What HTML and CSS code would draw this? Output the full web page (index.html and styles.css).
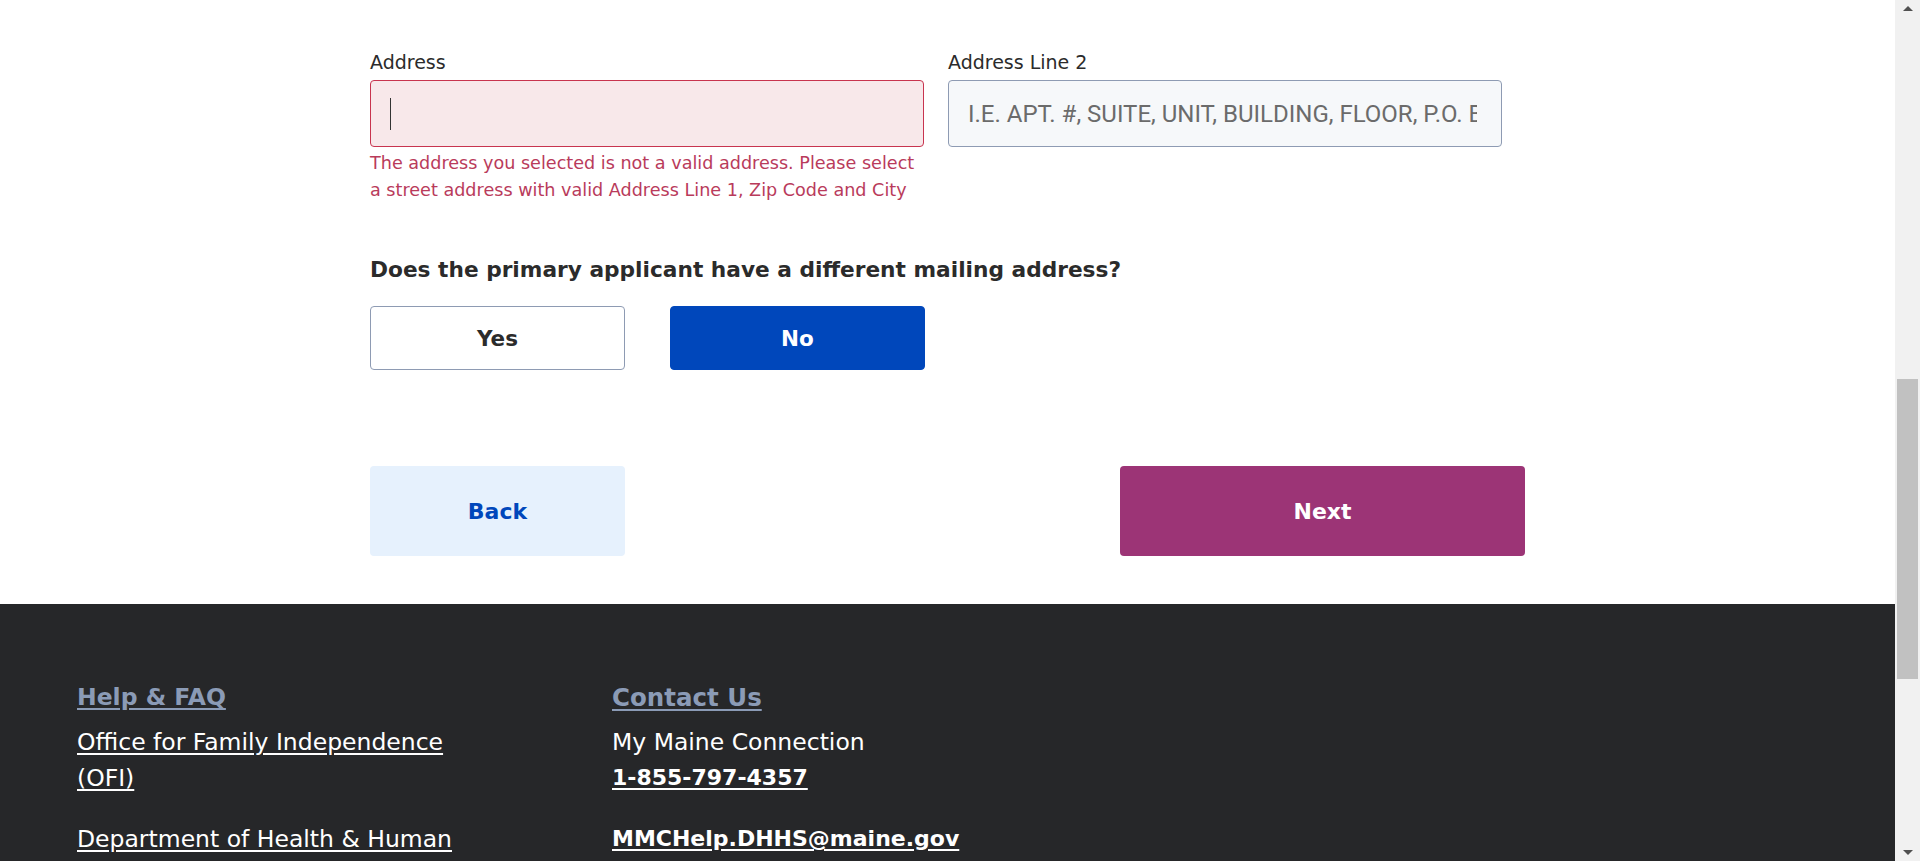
FILE: index.html
```html
<!DOCTYPE html>
<html lang="en">
<head>
<meta charset="utf-8">
<title>Primary applicant address</title>
<link rel="stylesheet" href="styles.css">
</head>
<body>
<div class="window">
  <div class="page">
    <main class="content">
      <div class="address-row">
        <div class="field-group">
          <label class="field-label">Address</label>
          <div class="input input-error"><span class="caret"></span></div>
          <p class="error-text">The address you selected is not a valid address. Please select<br>a street address with valid Address Line 1, Zip Code and City</p>
        </div>
        <div class="field-group">
          <label class="field-label" for="line2">Address Line 2</label>
          <input id="line2" class="input input-plain" placeholder="I.E. APT. #, SUITE, UNIT, BUILDING, FLOOR, P.O. BOX">
        </div>
      </div>
      <h2 class="question">Does the primary applicant have a different mailing address?</h2>
      <div class="choice-row">
        <button class="choice">Yes</button>
        <button class="choice choice-selected">No</button>
      </div>
      <div class="nav-row">
        <button class="btn-back">Back</button>
        <button class="btn-next">Next</button>
      </div>
    </main>
    <footer class="footer">
      <div class="footer-col">
        <a class="footer-heading" href="#">Help &amp; FAQ</a>
        <div class="footer-group">
          <a class="footer-link" href="#">Office for Family Independence (OFI)</a>
        </div>
        <div class="footer-group">
          <a class="footer-link" href="#">Department of Health &amp; Human Services (DHHS)</a>
        </div>
      </div>
      <div class="footer-col">
        <a class="footer-heading" href="#">Contact Us</a>
        <div class="footer-group">
          <span class="footer-text">My Maine Connection</span>
          <a class="footer-link footer-strong" href="#">1-855-797-4357</a>
        </div>
        <div class="footer-group">
          <a class="footer-link footer-strong" href="#">MMCHelp.DHHS@maine.gov</a>
        </div>
      </div>
    </footer>
  </div>
  <div class="scrollbar" aria-hidden="true">
    <span class="arrow arrow-up"></span>
    <div class="track"><div class="thumb"></div></div>
    <span class="arrow arrow-down"></span>
  </div>
</div>
</body>
</html>
```

FILE: styles.css
```css
* { box-sizing: border-box; }
html, body { margin: 0; height: 100%; }
body {
  font-family: "DejaVu Sans", "Open Sans", sans-serif;
  color: #2b2b2b;
  background: #fff;
  overflow: hidden;
}
.window { display: flex; height: 861px; }
.page { flex: 1; display: flex; flex-direction: column; overflow: hidden; }

.content { width: 1155px; margin: 0 auto; padding: 49px 0 48px; }

.address-row { display: grid; grid-template-columns: 554px 554px; column-gap: 24px; }
.field-label { display: block; font-size: 19px; line-height: 27px; margin-bottom: 4px; color: #2b2b2b; }
.input {
  display: flex; align-items: center;
  width: 100%; height: 67px;
  border-radius: 4px;
  padding: 0 24px 0 19px;
}
.input-error { background: #f8e8ea; border: 1px solid #c8344f; }
.caret { width: 1px; height: 32px; background: #333; }
.input-plain {
  background: #f6f8fa; border: 1px solid #8e9bb3;
  font-family: Roboto, sans-serif; font-size: 24px; color: #333; outline: none;
}
.input-plain::placeholder { color: #6b6b6b; }
.error-text { margin: 3px 0 0; font-size: 17.6px; line-height: 27px; color: #b93b5b; }

.question { margin: 51px 0 0; font-size: 21.7px; line-height: 30px; font-weight: 700; color: #2b2b2b; }

.choice-row { display: flex; gap: 45px; margin-top: 21px; }
.choice {
  width: 255px; height: 64px;
  border-radius: 4px; border: 1px solid #8e9bb3; background: #fff;
  font-family: inherit; font-size: 21.5px; font-weight: 700; color: #2b2b2b;
}
.choice-selected { background: #0047bb; border-color: #0047bb; color: #fff; }

.nav-row { display: flex; justify-content: space-between; margin-top: 96px; }
.btn-back, .btn-next {
  height: 90px; border: none; border-radius: 4px;
  font-family: inherit; font-size: 22px; font-weight: 700;
}
.btn-back { width: 255px; background: #e6f1fd; color: #0047bb; }
.btn-next { width: 405px; background: #9c3476; color: #fff; }

.footer { flex: 1; background: #262729; display: flex; padding: 77px 0 0 77px; }
.footer-col { width: 535px; display: flex; flex-direction: column; align-items: flex-start; }
.footer-heading {
  font-size: 23.5px; line-height: 33px; font-weight: 700; color: #8b9bb6;
  text-decoration: underline; text-underline-offset: 3px; margin-bottom: 10px;
}
.footer-col:last-child .footer-heading { font-size: 24.5px; }
.footer-group { display: flex; flex-direction: column; align-items: flex-start; max-width: 410px; margin-bottom: 25px; }
.footer-link, .footer-text { font-size: 23.5px; line-height: 36px; color: #fff; }
.footer-link { text-decoration: underline; text-underline-offset: 3px; }
.footer-strong { font-weight: 700; font-size: 22px; }

.scrollbar { width: 25px; background: #f1f1f1; display: flex; flex-direction: column; align-items: center; }
.track { flex: 1; width: 100%; padding: 0 2px; }
.thumb { margin-top: 362px; height: 300px; background: #c1c1c1; }
.arrow { width: 0; height: 0; border-left: 5px solid transparent; border-right: 5px solid transparent; margin: 6px 0; }
.arrow-up { border-bottom: 5px solid #505050; }
.arrow-down { border-top: 5px solid #505050; }
```
